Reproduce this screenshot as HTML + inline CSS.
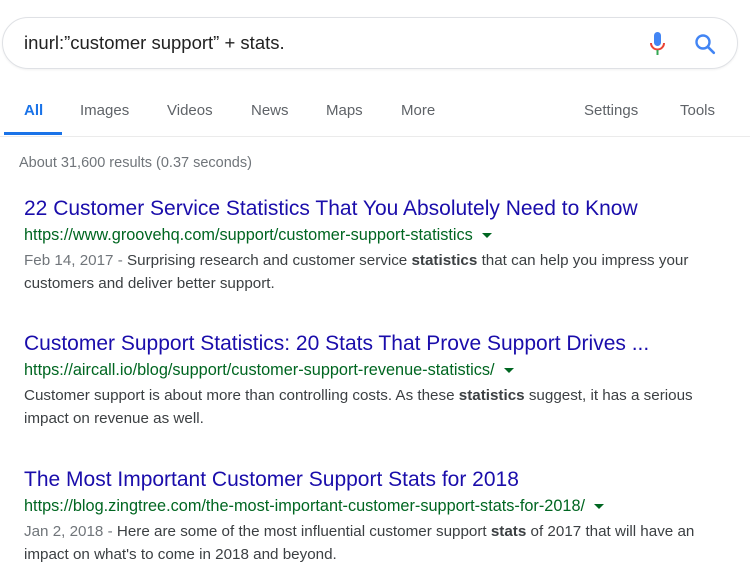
<!DOCTYPE html>
<html><head><meta charset="utf-8"><style>
body{margin:0;width:750px;height:585px;background:#fff;font-family:"Liberation Sans",Arial,sans-serif;position:relative;overflow:hidden}
.a{position:absolute;white-space:nowrap}
.box{position:absolute;left:2px;top:17px;width:736px;height:52px;border:1px solid #dfe1e5;border-radius:27px;box-sizing:border-box;box-shadow:0 1px 2px rgba(0,0,0,.06)}
.tab{position:absolute;top:102px;font-size:15px;color:#5f6368}
.t{font-size:21px;color:#1a0dab}
.u{font-size:16.3px;color:#006621}
.s{font-size:15.2px;color:#3c4043;line-height:23px}
.d{color:#70757a}
.tri{display:inline-block;width:0;height:0;border-left:5px solid transparent;border-right:5px solid transparent;border-top:5px solid #006621;margin-left:9px;vertical-align:middle}
</style></head><body>
<div class="box"></div>
<div class="a" style="left:24px;top:32px;font-size:18.5px;color:#222">inurl:”customer support” + stats.</div>
<svg class="a" style="left:648px;top:31px" width="20" height="26" viewBox="0 0 20 26"><rect x="6" y="1" width="7" height="14" rx="3.5" fill="#4285f4"/><path d="M3 12a6.5 6.5 0 0 0 13 0" stroke="#ea4335" stroke-width="2" fill="none"/><path d="M9.5 19v5" stroke="#34a853" stroke-width="2"/></svg>
<svg class="a" style="left:693px;top:32px" width="24" height="24" viewBox="0 0 24 24"><circle cx="10" cy="10" r="6.5" stroke="#4285f4" stroke-width="2.4" fill="none"/><path d="M14.8 14.8l6 6" stroke="#4285f4" stroke-width="2.6" stroke-linecap="round"/></svg>
<div class="tab" style="left:24px;color:#1a73e8;font-weight:bold">All</div>
<div class="tab" style="left:80px">Images</div>
<div class="tab" style="left:167px">Videos</div>
<div class="tab" style="left:251px">News</div>
<div class="tab" style="left:326px">Maps</div>
<div class="tab" style="left:401px">More</div>
<div class="tab" style="left:584px">Settings</div>
<div class="tab" style="left:680px">Tools</div>
<div class="a" style="left:4px;top:132px;width:58px;height:3px;background:#1a73e8"></div>
<div class="a" style="left:0;top:136px;width:750px;height:1px;background:#ebebeb"></div>
<div class="a" style="left:19px;top:155px;font-size:14.5px;color:#70757a">About 31,600 results (0.37 seconds)</div>

<div class="a t" style="left:24px;top:197px">22 Customer Service Statistics That You Absolutely Need to Know</div>
<div class="a u" style="left:24px;top:226px">https://www.groovehq.com/support/customer-support-statistics<span class="tri"></span></div>
<div class="a s" style="left:24px;top:249px"><span class="d">Feb 14, 2017 - </span>Surprising research and customer service <b>statistics</b> that can help you impress your<br>customers and deliver better support.</div>

<div class="a t" style="left:24px;top:332px">Customer Support Statistics: 20 Stats That Prove Support Drives ...</div>
<div class="a u" style="left:24px;top:361px">https://aircall.io/blog/support/customer-support-revenue-statistics/<span class="tri"></span></div>
<div class="a s" style="left:24px;top:384px">Customer support is about more than controlling costs. As these <b>statistics</b> suggest, it has a serious<br>impact on revenue as well.</div>

<div class="a t" style="left:24px;top:468px">The Most Important Customer Support Stats for 2018</div>
<div class="a u" style="left:24px;top:497px">https://blog.zingtree.com/the-most-important-customer-support-stats-for-2018/<span class="tri"></span></div>
<div class="a s" style="left:24px;top:520px"><span class="d">Jan 2, 2018 - </span>Here are some of the most influential customer support <b>stats</b> of 2017 that will have an<br>impact on what's to come in 2018 and beyond.</div>
</body></html>
